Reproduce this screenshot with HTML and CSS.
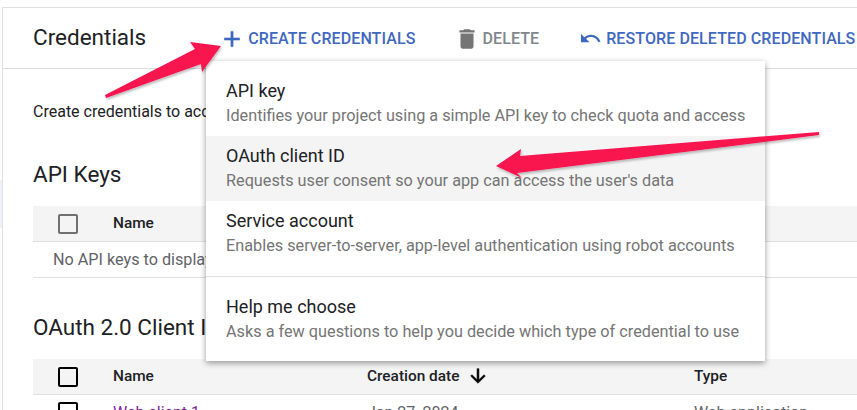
FILE: index.html
```html
<!DOCTYPE html>
<html lang="en">
<head>
<meta charset="utf-8">
<title>Credentials</title>
<link rel="stylesheet" href="styles.css">
</head>
<body>
<div class="page">
  <div class="shell">
    <header class="toolbar">
      <h1 class="title">Credentials</h1>
      <button class="action primary create">
        <svg class="icon" viewBox="0 0 24 24"><path d="M19 13h-6v6h-2v-6H5v-2h6V5h2v6h6v2z"/></svg>
        CREATE CREDENTIALS
      </button>
      <button class="action muted delete">
        <svg class="icon" viewBox="0 0 24 24"><path d="M6 19c0 1.100.9 2 2 2h8c1.100 0 2-.9 2-2V7H6v12zM19 4h-3.500l-1-1h-5l-1 1H5v2h14V4z"/></svg>
        DELETE
      </button>
      <button class="action primary restore">
        <svg class="icon" viewBox="0 0 24 24"><path d="M12.500 8c-2.650 0-5.050.99-6.900 2.600L2 7v9h9l-3.620-3.620c1.390-1.160 3.160-1.880 5.120-1.880 3.540 0 6.550 2.310 7.600 5.500l2.370-.78C21.080 11.030 17.150 8 12.500 8z"/></svg>
        RESTORE DELETED CREDENTIALS
      </button>
    </header>
    <main class="content">
      <p class="intro">Create credentials to access your enabled APIs</p>
      <h2 class="section api-title">API Keys</h2>
      <div class="table-head">
        <span class="check grey"></span>
        <span class="col-name">Name</span>
      </div>
      <div class="empty-row">No API keys to display</div>
      <h2 class="section oauth-title">OAuth 2.0 Client IDs</h2>
      <div class="table-head">
        <span class="check"></span>
        <span class="col-name">Name</span>
        <span class="col-date">Creation date
          <svg class="sort" viewBox="0 0 24 24"><path d="M20 12l-1.410-1.410L13 16.170V4h-2v12.170l-5.580-5.590L4 12l8 8 8-8z"/></svg>
        </span>
        <span class="col-type">Type</span>
      </div>
      <div class="data-row">
        <span class="check"></span>
        <a class="col-name client" href="#">Web client 1</a>
        <span class="col-date plain">Jan 27, 2024</span>
        <span class="col-type plain">Web application</span>
      </div>
    </main>
  </div>
  <div class="blue-strip"></div>
  <nav class="menu">
    <div class="item"><div class="item-title">API key</div><div class="item-desc">Identifies your project using a simple API key to check quota and access</div></div>
    <div class="item hover"><div class="item-title">OAuth client ID</div><div class="item-desc">Requests user consent so your app can access the user's data</div></div>
    <div class="item"><div class="item-title">Service account</div><div class="item-desc">Enables server-to-server, app-level authentication using robot accounts</div></div>
    <div class="divider"></div>
    <div class="item"><div class="item-title">Help me choose</div><div class="item-desc">Asks a few questions to help you decide which type of credential to use</div></div>
  </nav>
  <svg class="arrows" viewBox="0 0 857 410">
    <defs><filter id="soft" x="-20%" y="-40%" width="140%" height="180%"><feDropShadow dx="1" dy="2" stdDeviation="1.200" flood-color="#000" flood-opacity=".25"/></filter></defs>
    <polygon class="arrow" points="105,95 195,49 190,42 221,46 202,72 201,64 106,98"/>
    <polygon class="arrow" points="819,132 520,156 521,149 496,166 522,178 517,173 819,135"/>
  </svg>
</div>
</body>
</html>
```
FILE: styles.css
```css
* { box-sizing: border-box; }
html, body { margin: 0; padding: 0; background: #fff; }
body { font-family: Roboto, "Liberation Sans", sans-serif; color: #202124; }
.page { position: relative; width: 857px; height: 410px; overflow: hidden; padding-top: 7px; }
.shell { border-top: 1px solid #e0e0e0; border-left: 1px solid #e0e0e0; margin-left: 2px; height: 403px; overflow: hidden; }
.toolbar { display: flex; align-items: center; height: 61px; border-bottom: 1px solid #dadce0; padding: 1px 0 0 30px; white-space: nowrap; }
.title { margin: 0 73px 3px 0; font-size: 22.500px; font-weight: 400; color: #202124; }
.action { display: flex; align-items: center; gap: 3px; border: 0; background: none; padding: 0; font: 500 16px Roboto, sans-serif; letter-spacing: .1px; white-space: nowrap; flex: none; }
.icon { width: 26px; height: 26px; fill: currentColor; flex: none; }
.primary { color: #3f68c0; }
.create .icon { stroke: currentColor; stroke-width: .5px; }
.muted { color: #80868b; }
.muted .icon { fill: #757575; width: 26px; height: 26px; margin-left: 1px; }
.create { margin-right: 38px; }
.delete { margin-right: 40px; gap: 2px; }
.restore { gap: 4px; }
.restore .icon { width: 23px; height: 23px; }
.content { padding-left: 30px; }
.intro { margin: 0; padding-top: 34px; height: 64px; font-size: 16px; line-height: 18px; white-space: nowrap; }
.section { margin: 0; font-size: 22.500px; font-weight: 400; line-height: 26px; white-space: nowrap; }
.api-title { margin-top: 28px; margin-bottom: 19px; }
.oauth-title { margin-top: 36px; margin-bottom: 19px; }
.table-head { display: flex; align-items: center; height: 36px; background: #f4f4f4; border-bottom: 1px solid #e0e0e0; font-size: 15.400px; font-weight: 500; padding-left: 25px; }
.table-head .col-name, .table-head .col-date, .table-head .col-type { padding-bottom: 2px; }
.check { display: block; width: 20px; height: 20px; border: 2px solid #000; border-radius: 2px; flex: none; }
.check.grey { border-color: #707070; }
.col-name { margin-left: 35px; width: 254px; flex: none; }
.col-date { display: flex; align-items: center; gap: 8px; width: 327px; flex: none; }
.sort { width: 22px; height: 22px; fill: #000; stroke: #000; stroke-width: .6px; }
.col-type { flex: none; }
.empty-row { height: 36px; line-height: 35px; border-bottom: 1px solid #e0e0e0; padding-left: 20px; font-size: 16.200px; color: #5f6368; white-space: nowrap; }
.data-row { display: flex; align-items: flex-start; height: 36px; padding: 7px 0 0 25px; font-size: 16px; line-height: 18px; }
.data-row .col-name, .data-row .col-date, .data-row .col-type { padding-top: 2px; }
.client { color: #7b1fa2; text-decoration: none; }
.plain { color: #5f6368; }
.blue-strip { position: absolute; left: 0; top: 180px; width: 2px; height: 48px; background: #eef1fa; }
.menu { position: absolute; left: 206px; top: 61px; width: 559px; height: 300px; background: #fff; box-shadow: 0 2px 6px rgba(0,0,0,.4); padding-top: 10px; }
.item { height: 65px; padding: 8px 20px 0; }
.item.hover { background: #f4f4f4; }
.item-title { font-size: 18px; line-height: 24px; color: #202124; }
.item-desc { font-size: 16.250px; line-height: 22px; color: #757575; margin-top: 2px; white-space: nowrap; }
.divider { height: 1px; background: #e0e0e0; margin: 10px 0 10px; }
.arrows { position: absolute; left: 0; top: 0; width: 857px; height: 410px; pointer-events: none; }
.arrow { fill: #f9124f; filter: url(#soft); }
```
